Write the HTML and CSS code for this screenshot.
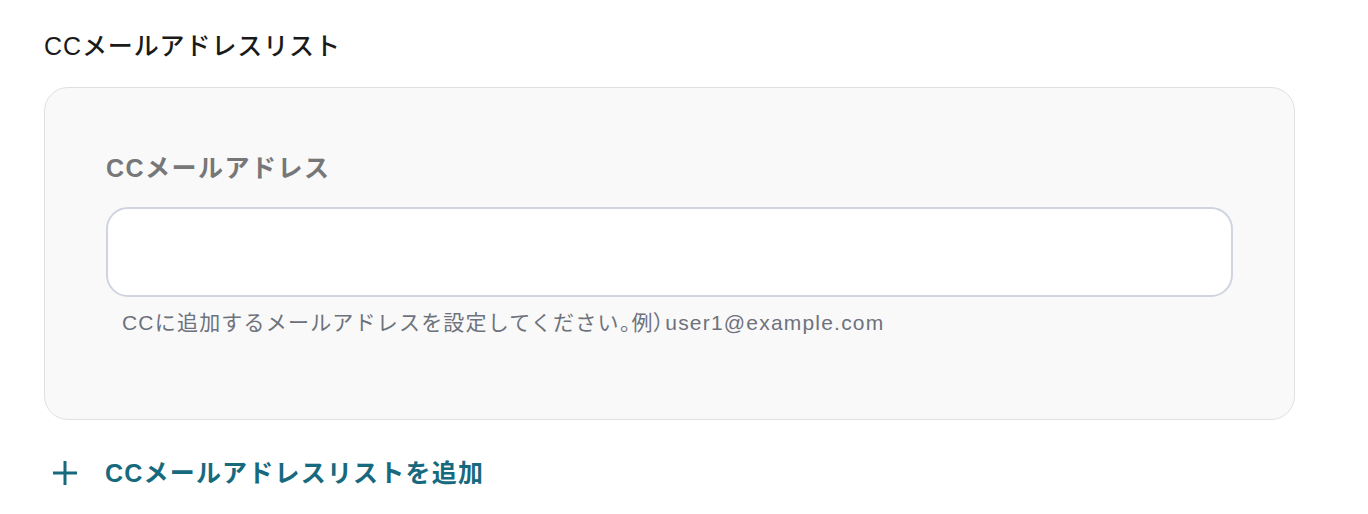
FILE: index.html
```html
<!DOCTYPE html>
<html lang="ja">
<head>
<meta charset="utf-8">
<link rel="stylesheet" href="styles.css">
</head>
<body>
<div class="page">
  <div class="title">CCメールアドレスリスト</div>
  <div class="panel">
    <div class="label">CCメールアドレス</div>
    <div class="input"></div>
    <div class="help">CCに追加するメールアドレスを設定してください<span class="p">。</span>例<span class="p">）</span>user1@example.com</div>
  </div>
  <div class="add">
    <svg class="plus" width="26" height="26" viewBox="0 0 26 26"><path d="M13 1V25M1 13H25" stroke="currentColor" stroke-width="3" fill="none"/></svg>
    <span>CCメールアドレスリストを追加</span>
  </div>
</div>
</body>
</html>
```
FILE: styles.css
```css
html, body { margin: 0; padding: 0; background: #fff; }
body { font-family: "Liberation Sans", "Noto Sans CJK JP", sans-serif; }
.page { padding: 30px 73px 0 44px; }
.title { font-size: 25px; line-height: 32px; letter-spacing: 0.9px; font-weight: 500; color: #1a1a1a; }
.panel {
  margin-top: 25px;
  background: #f9f9f9;
  border: 1.5px solid #e0e0e0;
  border-radius: 24px;
  padding: 64px 61px 82px 61px;
}
.label { font-size: 25px; line-height: 32px; letter-spacing: 1.5px; font-weight: 700; color: #777; }
.input {
  margin-top: 23px;
  height: 86px;
  background: #fff;
  border: 2px solid #cfd4de;
  border-radius: 22px;
}
.help { margin-top: 12px; padding-left: 16px; font-size: 21px; line-height: 28px; letter-spacing: 1.2px; color: #6e727c; }
.p { font-feature-settings: "palt"; }
.add { margin-top: 37px; display: flex; align-items: center; gap: 27px; padding-left: 8px; color: #17697e; font-size: 25px; line-height: 32px; letter-spacing: 1.2px; font-weight: 700; }
.plus { display: block; }
```
